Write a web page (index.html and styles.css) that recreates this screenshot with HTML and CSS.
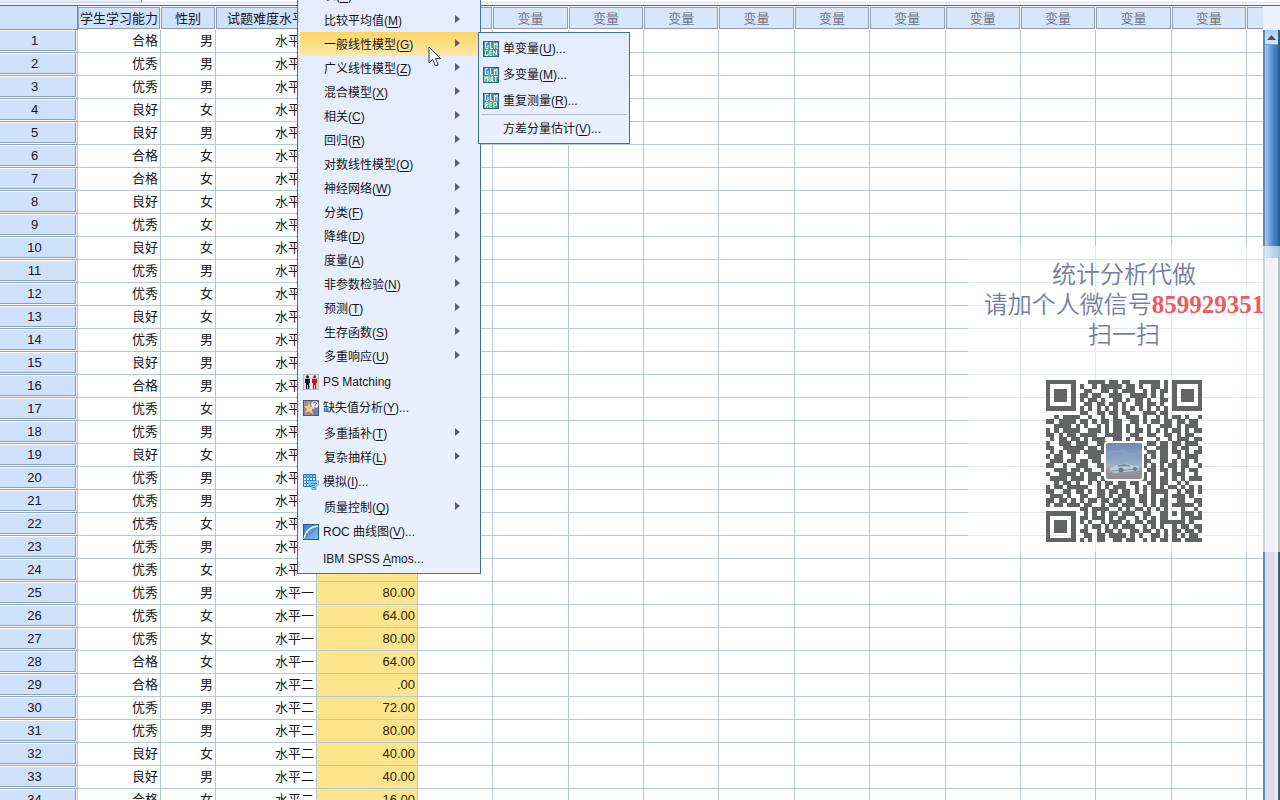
FILE: index.html
```html
<!DOCTYPE html>
<html lang="zh-CN">
<head>
<meta charset="utf-8">
<title>数据编辑器</title>
<link rel="stylesheet" href="styles.css">
</head>
<body>
<div class="editor">
  <div class="strip"><div class="strip-name"></div><div class="strip-info"></div></div>
  <div class="sheet">
    <table class="grid">
      <colgroup><col class="c-num"><col class="c-ability"><col class="c-sex"><col class="c-level"><col class="c-score"><col><col><col><col><col><col><col><col><col><col><col><col class="c-rest"></colgroup>
      <thead><tr>
        <th class="corner"></th><th scope="col"><span>学生学习能力</span></th><th scope="col"><span>性别</span></th><th scope="col"><span>试题难度水平</span></th><th><span></span></th><th class="unused"><span></span></th>
        <th class="unused"><span>变量</span></th><th class="unused"><span>变量</span></th><th class="unused"><span>变量</span></th><th class="unused"><span>变量</span></th><th class="unused"><span>变量</span></th><th class="unused"><span>变量</span></th><th class="unused"><span>变量</span></th><th class="unused"><span>变量</span></th><th class="unused"><span>变量</span></th><th class="unused"><span>变量</span></th><th class="unused last"><span></span></th>
      </tr></thead>
      <tbody id="rows"></tbody>
    </table>
    <div class="scrollbar">
      <button class="scroll-up" aria-label="向上滚动"><svg width="9" height="5" viewBox="0 0 9 5"><path d="M0 5 4.5 0 9 5z" fill="#4a5058"/></svg></button>
      <div class="thumb"></div>
    </div>
  </div>
</div>

<nav class="menu main-menu">
  <div class="group">
    <button class="item">表(<u>B</u>)</button>
    <button class="item more">比较平均值(<u>M</u>)</button>
    <button class="item more active">一般线性模型(<u>G</u>)</button>
    <button class="item more">广义线性模型(<u>Z</u>)</button>
    <button class="item more">混合模型(<u>X</u>)</button>
    <button class="item more">相关(<u>C</u>)</button>
    <button class="item more">回归(<u>R</u>)</button>
    <button class="item more">对数线性模型(<u>O</u>)</button>
    <button class="item more">神经网络(<u>W</u>)</button>
    <button class="item more">分类(<u>F</u>)</button>
    <button class="item more">降维(<u>D</u>)</button>
    <button class="item more">度量(<u>A</u>)</button>
    <button class="item more">非参数检验(<u>N</u>)</button>
    <button class="item more">预测(<u>T</u>)</button>
    <button class="item more">生存函数(<u>S</u>)</button>
    <button class="item more">多重响应(<u>U</u>)</button>
  </div>
  <div class="group tools">
    <button class="item tool"><svg class="icon" viewBox="0 0 16 16"><rect x=".5" y=".5" width="15" height="15" fill="#e9e6ea" stroke="#b9b7c2"/><g fill="#17191f"><circle cx="4.5" cy="2.7" r="1.5"/><path d="M2 4.7h5V9H6.3v6H5v-4h-.8v4H2.9V9H2z"/></g><g fill="#b01c24"><circle cx="11.5" cy="2.7" r="1.5"/><path d="M9 4.7h5V9h-.7v6H12v-4h-.8v4H9.900V9H9z"/></g></svg>PS Matching</button>
    <button class="item tool"><svg class="icon" viewBox="0 0 16 16"><rect x=".5" y=".5" width="15" height="15" fill="#8a83a8" stroke="#3d5a92"/><path d="M1 1h6v6H1zM2 10h5v5H2z" fill="#a98f86"/><path d="M6 2l1.500 5H14l-5 3 1 5-4-4-4 2 2-4-3-3h4z" fill="#f2cf76"/><path d="M9 9h6v6h-4z" fill="#6d7cb5"/><circle cx="11.8" cy="4.5" r="3.5" fill="#f5e9ef"/><path d="M10.4 3.500c0-2 3-2 3 0 0 1-1.500 1-1.500 2.200M11.900 6.800v1" stroke="#b32c55" fill="none"/></svg>缺失值分析(<u>Y</u>)...</button>
    <button class="item more">多重插补(<u>T</u>)</button>
    <button class="item more">复杂抽样(<u>L</u>)</button>
    <button class="item tool"><svg class="icon" viewBox="0 0 16 16"><path d="M.5.5h12v12H.5z" fill="#e3f5fd" stroke="#1c78bb"/><path d="M1 1h11v2H1z" fill="#80c6ee"/><path d="M.5 3.5h12M.5 6.5h12M.5 9.5h12M3.5.5v12M6.5.5v12M9.5.5v12" stroke="#2c8bca"/><path d="M6 7h10v3l-3 2v3.500H9V13l-1-2H6z" fill="#9ad6f3" stroke="#2c8bca" stroke-width=".7"/><path d="M8 9.500h6M9 11.500h3M10 13.500h2" stroke="#2175b8"/></svg>模拟(<u>I</u>)...</button>
    <button class="item more">质量控制(<u>Q</u>)</button>
    <button class="item tool"><svg class="icon" viewBox="0 0 16 16"><defs><linearGradient id="roc" x2="1" y2="1"><stop stop-color="#3676c0"/><stop offset="1" stop-color="#83c3ee"/></linearGradient></defs><rect x=".5" y=".5" width="15" height="15" fill="url(#roc)" stroke="#24589c"/><path d="M1 15Q3 3 15 2" fill="none" stroke="#e6f5ff" stroke-width="1.3"/><path d="M1 15 14 3" stroke="#3a7cc2" stroke-width=".6"/></svg>ROC 曲线图(<u>V</u>)...</button>
    <button class="item tool bare">IBM SPSS <u>A</u>mos...</button>
  </div>
</nav>

<nav class="menu sub-menu">
  <button class="item tool"><svg class="icon" viewBox="0 0 16 16"><rect x=".5" y=".5" width="15" height="15" fill="#4d93bd" stroke="#2a5f92"/><path d="M1 9h14v6H1z" fill="#46a67c"/><path d="M5 1.500H2.500v6H5V4M7.500 1v6.500H10M11.500 8V2l1.200 2L14 2v6M5 9.500H2.500v5H5v-2M9 9.500H6.800v5H9M7 12h2M10.500 15V9.500l3 4.500V9" fill="none" stroke="#e8f8ee"/></svg>单变量(<u>U</u>)...</button>
  <button class="item tool"><svg class="icon" viewBox="0 0 16 16"><rect x=".5" y=".5" width="15" height="15" fill="#4d93bd" stroke="#2a5f92"/><path d="M1 9h14v6H1z" fill="#46a67c"/><path d="M5 1.500H2.500v6H5V4M7.500 1v6.500H10M11.500 8V2l1.200 2L14 2v6M1.800 15V9.500l1.200 2 1.300-2V15M6 9v5.500h2V9M9.500 9v5.500H11M11 9.500h3.500M12.800 10v5" fill="none" stroke="#e8f8ee"/></svg>多变量(<u>M</u>)...</button>
  <button class="item tool"><svg class="icon" viewBox="0 0 16 16"><rect x=".5" y=".5" width="15" height="15" fill="#4d93bd" stroke="#2a5f92"/><path d="M1 9h14v6H1z" fill="#46a67c"/><path d="M5 1.500H2.500v6H5V4M7.500 1v6.500H10M11.500 8V2l1.200 2L14 2v6M2.500 15V9.500H5v2H3l2 3.500M9 9.500H6.800v5H9M7 12h2M10.800 15V9.500h2.700v3h-2.500" fill="none" stroke="#e8f8ee"/></svg>重复测量(<u>R</u>)...</button>
  <hr>
  <button class="item tool bare">方差分量估计(<u>V</u>)...</button>
</nav>

<svg class="pointer" width="14" height="22" viewBox="0 0 14 22"><path d="M1 1v16l3.700-3.500 2.800 6.500 2.700-1.200-2.800-6.300H12.500z" fill="#fff" stroke="#33384a" stroke-linejoin="round"/></svg>

<aside class="notice">
  <p>统计分析代做</p>
  <p>请加个人微信号<strong>859929351</strong></p>
  <p>扫一扫</p>
  <div class="code">
    <svg id="qr" viewBox="0 0 37 37" preserveAspectRatio="none" shape-rendering="crispEdges" role="img" aria-label="二维码"></svg>
    <svg class="photo" viewBox="0 0 40 40"><defs><linearGradient id="sky" x2="0" y2="1"><stop stop-color="#7089ac"/><stop offset=".5" stop-color="#8eaac8"/><stop offset=".68" stop-color="#a3b1bd"/><stop offset=".7" stop-color="#a09d9e"/><stop offset="1" stop-color="#8c8b90"/></linearGradient></defs><rect width="40" height="40" rx="4" fill="#f8fafb"/><rect x="2" y="2" width="36" height="36" rx="2" fill="url(#sky)"/><path d="M5 12q9-4 16 0t16-2M4 20q10-5 18-1M18 9l15 7" stroke="#8da5c1" fill="none"/><path d="M6 27q5-3 10-3 5-3 11 0l8 1v4l-5 1-20 2-4-2z" fill="#b9cddd"/><path d="M14 25q6-3 12 0zM7 30l28-2" fill="#647f9d" stroke="#7f93a8"/><circle cx="17" cy="29" r="2.500" fill="#6b7b8e"/><circle cx="31" cy="28" r="2" fill="#6b7b8e"/></svg>
  </div>
</aside>
<script src="app.js"></script>
</body>
</html>
```

FILE: styles.css
```css
* { box-sizing: border-box; }
body {
  margin: 0;
  height: 100vh;
  overflow: hidden;
  position: relative;
  background: #fff;
  color: #15171c;
  font: 13px/20px "Liberation Sans", "Noto Sans CJK SC", sans-serif;
}
button { font: inherit; color: inherit; border: 0; background: none; padding: 0; }
.editor { height: 100%; display: flex; flex-direction: column; }
.strip { flex: none; height: 6px; display: flex; border-bottom: 1px solid #3f70a2; background: #f4f8fd; }
.strip-name { width: 142px; height: 3px; background: #e9effa; border-right: 1px solid #8795a8; border-bottom: 1px solid #c9d5e6; }
.strip-info { flex: 1; height: 3px; background: #fff; border-bottom: 1px solid #dbe4f0; }
.sheet { flex: 1; min-height: 0; display: flex; background: linear-gradient(#eaf2fd 24px, #fff 24px); }

.grid { flex: 1; align-self: flex-start; width: 0; table-layout: fixed; border-collapse: separate; border-spacing: 0; }
.c-num { width: 78px; }
.c-ability { width: 83px; }
.c-sex { width: 55px; }
.c-level { width: 101px; }
.c-score { width: 101px; }
.c-rest { width: 16px; }
th, td { padding: 0; font-weight: normal; white-space: nowrap; }
thead th { height: 24px; background: #f4f8fe; }
thead th span { display: block; height: 22px; margin: 0 1px 0 0; border: 1px solid #8f9db4; background: #cfe1fb; overflow: hidden; line-height: 22px; }
thead .corner { background: #cfe1fb; border-right: 1px solid #7d8da6; border-bottom: 1px solid #8393ab; }
thead .unused span { background: #d8e6fb; color: #70757e; }
thead .last span { border-right: 0; margin-right: 0; }
tbody th, tbody td { height: 23px; border-bottom: 1px solid #b5c8d9; border-right: 1px solid #b5c8d9; }
tbody td { padding-right: 2px; text-align: right; background: #fff; }
tbody td:last-child { border-right: 0; }
tbody th { background: #f7fafe; border-bottom-color: #8fa6c0; }
tbody th span { display: block; height: 21px; border: solid #8ba0bd; border-width: 0 1px 1px 0; border-top: 1px solid #fff; background: #cfe1fb; padding-right: 6px; margin: 0 1px 1px 0; }
tbody td.score { background: #fee48b; background-clip: padding-box; color: #2b2410; border-left: 1px solid #dfe4e0; }

.scrollbar { flex: none; width: 17px; margin-top: 24px; border-left: 2px solid #5b8fb6; border-right: 2px solid #2c6285; background: linear-gradient(90deg, #d8e2f3, #ddd6e7 60%, #eef3fa); }
.scroll-up { display: flex; width: 100%; height: 15px; align-items: center; justify-content: center; background: linear-gradient(#a8cdf4, #d9eafc); border-bottom: 1px solid #70a3d6; }
.thumb { height: 213px; background: linear-gradient(90deg, #a5c9f0, #4583c8 70%, #3474b8); }

.menu { position: absolute; display: flex; flex-direction: column; border: 1px solid #41709c; background: linear-gradient(#e4edfd, #e9f1fd); font-size: 12px; }
.main-menu { left: 297px; top: -17px; width: 184px; padding: 0 2px 2px; }
.sub-menu { left: 478px; top: 32px; width: 152px; padding: 3px 2px 2px; }
.group { display: flex; flex-direction: column; }
.tools { margin-top: 1px; }
.item { height: 24px; display: flex; align-items: center; padding-left: 24px; text-align: left; white-space: pre; }
.item u { text-underline-offset: 2px; }
.more { padding-top: 2px; }
.more::after { content: ""; margin-left: auto; margin-right: 18px; margin-bottom: 4px; border: solid transparent; border-width: 4px 0 4px 5px; border-left-color: #59606c; }
.tool { height: 26px; padding-left: 3px; }
.bare { padding: 2px 0 0 23px; }
.icon { width: 16px; height: 16px; margin-right: 4px; flex: none; }
.active { background: linear-gradient(#fed565, #fee9a9); }
.sub-menu hr { width: 100%; height: 1px; margin: 0; border: 0; background: #b3bfd0; }
.sub-menu .tool { padding-left: 2px; }
.sub-menu .bare { padding-left: 22px; }
.pointer { position: absolute; left: 428px; top: 46px; }

.notice { position: absolute; right: 0; top: 246px; width: 312px; padding: 12px 0 10px; background: rgba(255, 255, 255, .62); color: #76809c; font: 350 24px/30px "Noto Sans CJK SC", sans-serif; text-align: center; }
.notice p { margin: 0; height: 30px; white-space: nowrap; }
.notice strong { color: #ec5a60; font: bold 25px/20px "Liberation Serif", serif; }
.code { display: grid; place-items: center; width: 156px; height: 162px; margin: 32px auto 0; }
.code > svg { grid-area: 1 / 1; }
#qr { width: 156px; height: 162px; fill: #626365; }
.photo { width: 40px; height: 42px; }
```

FILE: app.js
```js
const people = [
  "合格男", "优秀男", "优秀男", "良好女", "良好男", "合格女", "合格女", "良好女", "优秀女", "良好女",
  "优秀男", "优秀女", "良好女", "优秀男", "良好男", "合格男", "优秀女", "优秀男", "良好女", "优秀男",
  "优秀男", "优秀女", "优秀男", "优秀女", "优秀男", "优秀女", "优秀女", "合格女", "合格男", "优秀男",
  "优秀男", "良好女", "良好男", "合格女"
];
const scores = { 25: "80.00", 26: "64.00", 27: "80.00", 28: "64.00", 29: ".00", 30: "72.00", 31: "80.00", 32: "40.00", 33: "40.00", 34: "16.00" };

document.getElementById("rows").innerHTML = people.map((p, i) => {
  const n = i + 1;
  return `<tr><th scope="row"><span>${n}</span></th><td>${p.slice(0, 2)}</td><td>${p[2]}</td>` +
    `<td>${n < 29 ? "水平一" : "水平二"}</td><td class="score">${scores[n] || ""}</td>${"<td></td>".repeat(12)}</tr>`;
}).join("");

const modules = [
  "#######...####.##.##..#####.#.#######",
  "#.....#.#..#.#####.##.#..##.#.#.....#",
  "#.###.#..##..##.#.###..#.#.##.#.###.#",
  "#.###.#.##.##..###..####.#.#..#.###.#",
  "#.###.#.#.##.#..##.#.##.#..##.#.###.#",
  "#.....#..##.##.##.#..##.##.#..#.....#",
  "#######.#.#.#.#.#.#.#.#.#.#.#.#######",
  "........##..##.##.##...###.##........",
  "..#.####..#..#..#..###.#..#.#.##.#..#",
  "##.####.##.#.##.##..##.#.##.##.##.##.",
  "..####.#.#..#.#.##.#.#..#..###.#.###.",
  "#.#.####..###.#.##.#.##.#.#.#.##.#.##",
  "##.#.##.####..####..##..##..##.#.##..",
  ".#.##.##.#.###..##.#.##...#..#.###.##",
  "#..###.###..####...#.#..##.##.##.###.",
  "##..#####.##.##.......##..###.#.##..#",
  ".#.#.###.#####........#.##.##.##.#.##",
  "#.##..#...###.........##.#.##..#.###.",
  ".###.##.##.##..........##..##.#.##.#.",
  "##..#..###..##........##.#.#.##.##..#",
  "..###.##.##..#........#.##.##.#.#.##.",
  "#..####.#.###.........##.#..#.###..#.",
  ".####.###.##.#........##.#.##.#.#.###",
  "..#.##.#..#.#.##.##.##..##.##..#.#...",
  "#.##.#####..#.#.###..#.#.#.#.##.#.#.#",
  "##..##.##.#.##.##.##.#.#.####..#.##.#",
  ".###.#..##..##.#.###..##.#..#.###.#..",
  "##.##.#.#.##.##.##.##.##.#.##..##..##",
  "#.##.###.##..#.##.###..#.#.##.#####.#",
  "........##.####..#.#.##.#.#.#...#..#.",
  "#######..#.#.#.##.###..##..##.#.###.#",
  "#.....#.##.###.#.##..#.#.#.##...#.###",
  "#.###.#.#.#..#.###.#.##.##.######.#..",
  "#.###.#..#.##.#.#.###..#.#.#..#.##.##",
  "#.###.#.##..#.##.#..##.##.#.#.##.##.#",
  "#.....#..##.##.####.#.#..##.#.#.#.##.",
  "#######.#.#.##..##.##..#.#.##.##.####"
];
document.getElementById("qr").innerHTML = modules.map((row, y) =>
  [...row].map((m, x) => m === "#" ? `<rect x="${x}" y="${y}" width="1" height="1"/>` : "").join("")
).join("");
```
